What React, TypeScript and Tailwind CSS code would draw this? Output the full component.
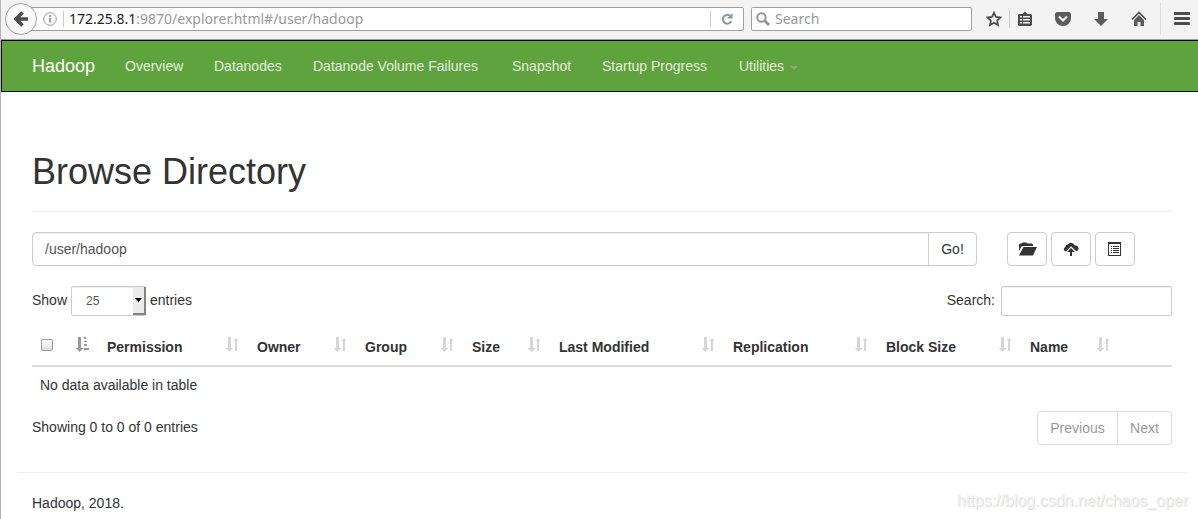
import React from "react";

const navLinks = [
  { name: "Overview", width: "w-[89px]" },
  { name: "Datanodes", width: "w-[99px]" },
  { name: "Datanode Volume Failures", width: "w-[199px]" },
  { name: "Snapshot", width: "w-[90px]" },
  { name: "Startup Progress", width: "w-[137px]" },
];

const columns = [
  { name: "Permission", width: "w-[150px]" },
  { name: "Owner", width: "w-[108px]" },
  { name: "Group", width: "w-[107px]" },
  { name: "Size", width: "w-[87px]" },
  { name: "Last Modified", width: "w-[174px]" },
  { name: "Replication", width: "w-[153px]" },
  { name: "Block Size", width: "w-[144px]" },
  { name: "Name", width: "w-[98px]" },
];

function SortIcon() {
  return (
    <svg width="14" height="16" viewBox="0 0 14 16" fill="#d6d6d6" aria-hidden="true">
      <path d="M2 0h3v11h2.500L3.500 15-.5 11H2z" />
      <path d="M9 14V4H7.500L10 1l2.500 3H11v10z" />
    </svg>
  );
}

function SortAscIcon() {
  return (
    <svg width="14" height="16" viewBox="0 0 14 16" fill="#999" aria-hidden="true">
      <path d="M2 0h3v11h2.500L3.500 15 0 11h2z" />
      <path d="M8 0h2v2H8zM8 4h3v1H8zM8 7h3v2H8zM8 11h5v2H8z" />
    </svg>
  );
}

function BrowserBar() {
  return (
    <div className="flex h-10 items-center border-b border-[#a0a0a0] bg-[#f3f3f3] pb-px pl-1 pr-2 font-['Noto_Sans',sans-serif] text-sm">
      <button
        type="button"
        aria-label="Back"
        className="z-10 flex size-8 shrink-0 items-center justify-center rounded-full border border-[#a0a0a0] bg-[#fafafa]"
      >
        <svg width="14" height="16" viewBox="0 0 14 16" fill="none" stroke="#4c4c4c" aria-hidden="true">
          <path d="M8.500 1.500 2 8l6.500 6.500M2.500 8H14" strokeWidth="3.600" />
        </svg>
      </button>
      <div className="-ml-2 flex h-6 flex-1 items-center rounded-r-xs border border-[#a0a0a0] bg-white pl-[13px]">
        <svg width="14" height="14" viewBox="0 0 14 14" fill="none" stroke="#999" aria-hidden="true">
          <circle cx="7" cy="7" r="6.300" />
          <path d="M7 6v4.500M7 3v2" strokeWidth="1.800" />
        </svg>
        <span className="ml-1.5 h-4 w-px bg-[#ccc]" />
        <div className="flex-1 pl-[5px] leading-5 text-[#999]">
          <span className="text-[#222]">172.25.8.1</span>:9870/explorer.html#/user/hadoop
        </div>
        <span className="h-4 w-px bg-[#ccc]" />
        <button type="button" aria-label="Reload" className="px-2.5">
          <svg width="12" height="12" viewBox="0 0 12 12" fill="none" aria-hidden="true">
            <path d="M9 2.800A4.400 4.400 0 1 0 10.300 8" stroke="#8798a5" strokeWidth="2" />
            <path d="M11.500 0v5.500H6z" fill="#8798a5" />
          </svg>
        </button>
      </div>
      <label className="ml-[7px] flex h-6 w-[221px] items-center rounded-xs border border-[#a0a0a0] bg-white pl-1">
        <svg width="14" height="14" viewBox="0 0 14 14" fill="none" stroke="#949494" className="shrink-0" aria-hidden="true">
          <circle cx="5.500" cy="5.500" r="4.200" strokeWidth="2" />
          <path d="m8.500 8.500 4.500 4.500" strokeWidth="2.800" />
        </svg>
        <input
          aria-label="Search the web"
          placeholder="Search"
          className="ml-[5px] w-full leading-5 outline-none placeholder:text-[#999]"
        />
      </label>
      <div className="ml-3.5 flex items-center">
        <button type="button" aria-label="Bookmark">
          <svg width="16" height="16" viewBox="0 0 16 16" fill="none" stroke="#4c4c4c" strokeWidth="1.700" aria-hidden="true">
            <path d="m8 1.700 1.900 4.200 4.600.5-3.400 3.100.9 4.500-4-2.300L4 14l.9-4.500L1.500 6.400l4.600-.5z" />
          </svg>
        </button>
        <span className="mx-[7px] h-[18px] w-px bg-[#ccc]" />
        <button type="button" aria-label="Library">
          <svg width="16" height="16" viewBox="0 0 16 16" aria-hidden="true">
            <path d="M2 3h3.500L8 .5 10.500 3H14l1 1v10l-1 1H2l-1-1V4z" fill="#4c4c4c" />
            <path d="M3 5h2v1.500H3zM3 8h2v1.500H3zM3 11h2v1.500H3zM6 5h7v1.500H6zM6 8h7v1.500H6zM6 11h7v1.500H6z" fill="#f3f3f3" />
          </svg>
        </button>
        <button type="button" aria-label="Pocket" className="ml-[22px]">
          <svg width="16" height="16" viewBox="0 0 16 16" fill="none" aria-hidden="true">
            <path d="M1.500 1h13L16 2.500V7a8 8 0 0 1-16 0V2.500z" fill="#5c5c5c" />
            <path d="m4 5.500 4 4 4-4" stroke="#f3f3f3" strokeWidth="2.200" />
          </svg>
        </button>
        <button type="button" aria-label="Downloads" className="ml-[22px]">
          <svg width="16" height="16" viewBox="0 0 16 16" fill="#5c5c5c" aria-hidden="true">
            <path d="M5 1h6v7h4l-7 7-7-7h4z" />
          </svg>
        </button>
        <button type="button" aria-label="Home" className="ml-[22px]">
          <svg width="16" height="16" viewBox="0 0 16 16" aria-hidden="true">
            <path d="m1 8.500 7-7 7 7" fill="none" stroke="#4c4c4c" strokeWidth="1.600" />
            <path d="m8 4 5 5v6H9.500v-4h-3v4H3V9z" fill="#5c5c5c" />
          </svg>
        </button>
        <span className="mx-[13px] h-8 w-px bg-[#dcdcdc]" />
        <button type="button" aria-label="Menu">
          <svg width="16" height="16" viewBox="0 0 16 16" fill="#4c4c4c" aria-hidden="true">
            <rect y="1" width="16" height="3" rx="1" />
            <rect y="6" width="16" height="3" rx="1" />
            <rect y="11" width="16" height="3" rx="1" />
          </svg>
        </button>
      </div>
    </div>
  );
}

function Navbar() {
  return (
    <nav className="flex h-[52px] items-center border-y border-l border-[#080808] bg-[#5fa33e] pl-[30px] text-[#e3f0dc]">
      <a href="#" className="w-[93px] text-lg leading-5 text-white">
        Hadoop
      </a>
      {navLinks.map((link) => (
        <a key={link.name} href="#" className={`${link.width} whitespace-nowrap`}>
          {link.name}
        </a>
      ))}
      <a href="#" className="flex items-center gap-1.5">
        Utilities
        <svg width="8" height="4" viewBox="0 0 8 4" fill="#999" className="mt-1" aria-hidden="true">
          <path d="M0 0h8L4 4z" />
        </svg>
      </a>
    </nav>
  );
}

function PathBar() {
  const actionClass =
    "flex h-[34px] w-10 items-center justify-center rounded-sm border border-[#ccc] bg-white";
  return (
    <div className="mt-5 flex">
      <input
        aria-label="Directory"
        defaultValue="/user/hadoop"
        className="h-[34px] min-w-0 flex-1 rounded-l-sm border border-[#ccc] px-3 text-[#555] shadow-[inset_0_1px_1px_rgba(0,0,0,0.075)] outline-none"
      />
      <button type="button" className="-ml-px h-[34px] w-[49px] rounded-r-sm border border-[#ccc] bg-white">
        Go!
      </button>
      <div className="flex w-[195px] gap-1 pl-[30px]">
        <button type="button" aria-label="Create directory" className={actionClass}>
          <svg width="18" height="14" viewBox="0 0 18 14" fill="#333" className="ml-0.5" aria-hidden="true">
            <path d="M0 9V2.500L1 1.500h1.500L3.500.5h4l1 1h4.500l1 1V4H4L2.500 4.500z" />
            <path d="M4.500 5H18l-4 8.500H0z" />
          </svg>
        </button>
        <button type="button" aria-label="Upload files" className={actionClass}>
          <svg width="16" height="16" viewBox="0 0 16 16" fill="#333" aria-hidden="true">
            <path d="M3 10.500A2.300 2.300 0 0 1 2.500 6 2.300 2.300 0 0 1 4.800 3.500 4 4 0 0 1 11.800 4.600a2.900 2.900 0 0 1 1.500 5.700L8 5.300z" />
            <path d="m8 7 4 4H9v4H7v-4H4z" />
          </svg>
        </button>
        <button type="button" aria-label="Cut and paste" className={actionClass}>
          <svg width="14" height="14" viewBox="0 0 14 14" fill="#333" aria-hidden="true">
            <path d="M0 0h13v14H0zM1 2v11h11V2z" fillRule="evenodd" />
            <path d="M3 4h1v1H3zM3 6h1v1H3zM3 8h1v1H3zM3 10h1v1H3zM5 4h6v1H5zM5 6h6v1H5zM5 8h6v1H5zM5 10h6v1H5z" />
          </svg>
        </button>
      </div>
    </div>
  );
}

function TableControls() {
  return (
    <div className="mt-5 flex items-center justify-between">
      <label className="flex gap-1 leading-7">
        <span className="w-[35px] whitespace-nowrap">Show</span>
        <span className="relative flex">
          <select
            defaultValue="25"
            className="h-[30px] w-[75px] appearance-none rounded-xs border border-[#ccc] bg-white pl-3.5 text-xs text-[#555] shadow-[inset_0_1px_1px_rgba(0,0,0,0.075)]"
          >
            <option>10</option>
            <option>25</option>
            <option>50</option>
            <option>100</option>
          </select>
          <span className="pointer-events-none absolute inset-y-px right-0 flex w-[13px] items-center justify-center border-b-2 border-r-2 border-[#858585] bg-[#ececec]">
            <svg width="7" height="4" viewBox="0 0 7 4" aria-hidden="true">
              <path d="M0 0h7L3.500 4z" />
            </svg>
          </span>
        </span>
        <span>entries</span>
      </label>
      <label className="flex gap-1.5 leading-7">
        Search:
        <input
          type="search"
          className="h-[30px] w-[171px] rounded-xs border border-[#ccc] px-2.5 shadow-[inset_0_1px_1px_rgba(0,0,0,0.075)] outline-none"
        />
      </label>
    </div>
  );
}

function FileTable() {
  return (
    <table className="mt-[13px] w-full table-fixed text-left">
      <thead>
        <tr className="border-b-2 border-[#ddd]">
          <th className="w-[67px] p-2">
            <div className="flex h-5 items-center justify-between">
              <input
                type="checkbox"
                aria-label="Select all"
                className="mb-1 ml-px size-3 appearance-none rounded-xs border border-[#999] bg-linear-to-b from-white to-[#ddd]"
              />
              <span className="pb-1 pr-px">
                <SortAscIcon />
              </span>
            </div>
          </th>
          {columns.map((column) => (
            <th key={column.name} className={`${column.width} p-2 font-bold`}>
              <div className="flex h-5 items-center justify-between whitespace-nowrap">
                {column.name}
                <span className="pb-1 pr-px">
                  <SortIcon />
                </span>
              </div>
            </th>
          ))}
          <th className="w-[52px]" />
        </tr>
      </thead>
      <tbody>
        <tr>
          <td colSpan={10} className="p-2">
            No data available in table
          </td>
        </tr>
      </tbody>
    </table>
  );
}

function App() {
  return (
    <div className="relative min-h-screen border-l border-[#b5b5b5] bg-white font-['Liberation_Sans',Arial,sans-serif] text-sm leading-5 text-[#333]">
      <BrowserBar />
      <Navbar />
      <main className="pl-[31px] pr-[26px] pt-[60px]">
        <h1 className="border-b border-[#eee] pb-[19px] text-4xl leading-10">Browse Directory</h1>
        <PathBar />
        <TableControls />
        <FileTable />
        <div className="mt-2 flex justify-between">
          <p className="pt-1.5">Showing 0 to 0 of 0 entries</p>
          <div className="flex text-[#999]">
            <button type="button" className="h-[34px] w-[81px] rounded-l-sm border border-[#ddd]">
              Previous
            </button>
            <button type="button" className="-ml-px h-[34px] w-[55px] rounded-r-sm border border-[#ddd]">
              Next
            </button>
          </div>
        </div>
        <footer className="-mx-[15px] mt-[27px] border-t border-[#eee] px-[15px] pb-1.5 pt-5">
          <p>Hadoop, 2018.</p>
        </footer>
      </main>
      <div className="absolute bottom-2 right-2.5 text-base leading-5 text-[#f2f2f2] [text-shadow:1px_1px_1px_#d8d8d8]">
        https://blog.csdn.net/chaos_oper
      </div>
    </div>
  );
}

export default App;
